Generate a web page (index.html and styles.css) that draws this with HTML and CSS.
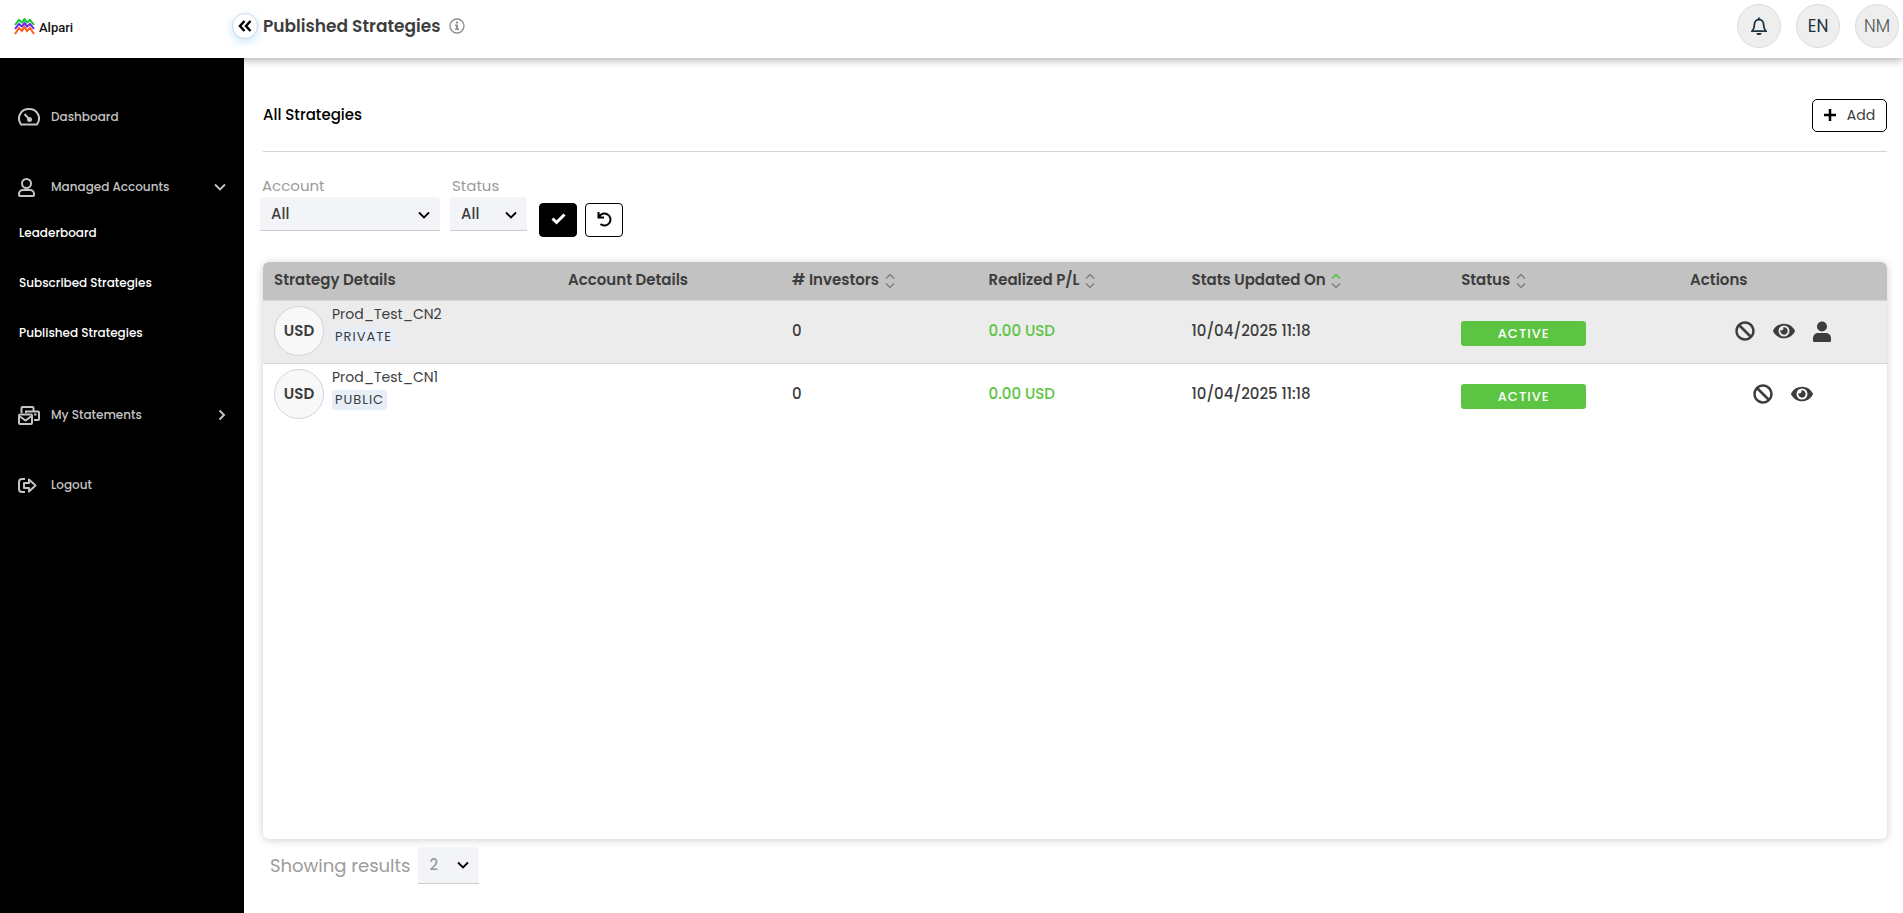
FILE: index.html
```html
<!DOCTYPE html>
<html lang="en">
<head>
  <meta charset="UTF-8">
  <meta name="viewport" content="width=device-width, initial-scale=1.0">
  <title>Published Strategies</title>
  <link rel="stylesheet" href="styles.css">
</head>
<body>

  <!-- shared icons -->
  <svg class="sprite" aria-hidden="true">
    <symbol id="icon-down" viewBox="0 0 12 8"><path d="M1 1.500 6 6.500l5-5" fill="none" stroke="currentColor" stroke-width="1.800"/></symbol>
    <symbol id="icon-sort" viewBox="0 0 10 16"><path class="up" d="M1 5.500 5 1.500l4 4"/><path class="down" d="M1 10.500l4 4 4-4"/></symbol>
    <symbol id="icon-ban" viewBox="0 0 512 512"><path fill="currentColor" d="M256 8C119 8 8 119 8 256s111 248 248 248 248-111 248-248S393 8 256 8zm130 118c66 66 70 165 22 235L151 104c71-49 170-44 235 22zM126 386c-66-66-70-165-22-235l257 257c-71 49-170 44-235-22z"/></symbol>
    <symbol id="icon-eye" viewBox="0 0 576 512"><path fill="currentColor" d="M572.500 241.400C518.300 135.600 410.900 64 288 64S57.700 135.600 3.500 241.400a32.400 32.400 0 0 0 0 29.200C57.700 376.400 165.100 448 288 448s230.300-71.600 284.500-177.400a32.400 32.400 0 0 0 0-29.200zM288 400a144 144 0 1 1 144-144 143.900 143.900 0 0 1-144 144zm0-240a95.300 95.300 0 0 0-25.300 3.800 47.900 47.900 0 0 1-66.900 66.900A95.800 95.800 0 1 0 288 160z"/></symbol>
    <symbol id="icon-user" viewBox="0 0 18 21"><circle cx="9" cy="5.500" r="5" fill="currentColor"/><path fill="currentColor" d="M5 12h8a5 5 0 0 1 5 5v2.500a1.500 1.500 0 0 1-1.500 1.500h-15A1.500 1.500 0 0 1 0 19.500V17a5 5 0 0 1 5-5z"/></symbol>
  </svg>

  <header class="topbar">
    <a class="logo" href="#">
      <svg width="21" height="17" viewBox="0 0 21 17" fill="none" stroke-width="2" aria-hidden="true">
        <path stroke="#12c931" d="M1 7l4-5 3 2.500L10.500 1 13 4.500 16 2l4 5"/>
        <path stroke="#6a25e8" d="M1 11l4-5 3 2.500L10.500 5 13 8.500 16 6l4 5"/>
        <path stroke="#ff5a1f" d="M1 16l4-6 3 3 2.500-4L13 13l3-3 4 6"/>
      </svg>
      <span>Alpari</span>
    </a>
    <button class="collapse" type="button" aria-label="Collapse menu">
      <svg width="14" height="12" viewBox="0 0 14 12" fill="none" stroke="currentColor" stroke-width="2.500" aria-hidden="true"><path d="M6.500 1 2 6l4.500 5M12.500 1 8 6l4.500 5"/></svg>
    </button>
    <h1>Published Strategies</h1>
    <svg class="info" width="16" height="16" viewBox="0 0 16 16" aria-hidden="true">
      <circle cx="8" cy="8" r="7" fill="none" stroke="currentColor" stroke-width="1.300"/>
      <path fill="currentColor" d="M7 3.500h2v2H7zM6 6.500h3v4h1v1.500H6v-1.500h1V8H6z"/>
    </svg>
    <div class="topbar-actions">
      <button class="round" type="button" aria-label="Notifications">
        <svg width="16" height="18" viewBox="0 0 16 18" fill="none" stroke="currentColor" stroke-width="1.800" aria-hidden="true">
          <path d="M8 .5v2M3.500 7a4.500 4.500 0 0 1 9 0c0 4.500 1.500 6 2.500 7.200H1C2 13 3.500 11.500 3.500 7z"/><path fill="currentColor" stroke="none" d="M5.500 16h5a2.500 2.200 0 0 1-5 0z"/>
        </svg>
      </button>
      <button class="round" type="button">EN</button>
      <button class="round user" type="button">NM</button>
    </div>
  </header>

  <div class="layout">
    <nav class="sidebar">
      <a class="nav-item" href="#">
        <svg width="22" height="18" viewBox="0 0 22 18" fill="none" stroke="currentColor" stroke-width="2" aria-hidden="true"><path d="M3 16.500C-2 9 3 1 11 1s13 8 8 15.500z"/><circle cx="11.500" cy="11.500" r="2.500" fill="currentColor" stroke="none"/><path d="M6.500 6l5 5.500"/></svg>
        <span>Dashboard</span>
      </a>
      <a class="nav-item" href="#">
        <svg width="17" height="19" viewBox="0 0 17 19" fill="none" stroke="currentColor" stroke-width="2" aria-hidden="true"><circle cx="8.500" cy="5.500" r="4.500"/><path d="M5 12h7c2 0 4 1.500 4 4v1q0 1-1 1H2q-1 0-1-1v-1c0-2.500 2-4 4-4z"/></svg>
        <span>Managed Accounts</span>
        <svg class="arrow" width="12" height="8"><use href="#icon-down"/></svg>
      </a>
      <div class="sub-menu">
        <a href="#">Leaderboard</a>
        <a href="#">Subscribed Strategies</a>
        <a href="#">Published Strategies</a>
      </div>
      <a class="nav-item" href="#">
        <svg width="22" height="19" viewBox="0 0 22 19" fill="none" stroke="currentColor" stroke-width="2" aria-hidden="true"><path d="M3.500 7V2q0-1 1-1h10q1 0 1 1v3M8 7V5.500h12q1 0 1 1V13q0 1-1 1h-4M16 8.500h2.500"/><rect x="1" y="8.500" width="13" height="9.500" rx="1"/><path d="M2 10.500l5.500 4 5.500-4"/></svg>
        <span>My Statements</span>
        <svg class="arrow" width="8" height="12" viewBox="0 0 8 12" fill="none" stroke="currentColor" stroke-width="2" aria-hidden="true"><path d="M1.500 1.500 6 6l-4.500 4.500"/></svg>
      </a>
      <a class="nav-item" href="#">
        <svg width="19" height="15" viewBox="0 0 19 15" fill="none" stroke="currentColor" stroke-width="2" stroke-linejoin="round" aria-hidden="true"><path d="M7 1H4Q1 1 1 4v7q0 3 3 3h3M11 5V1.500l6.500 6-6.500 6V10H6V5z"/></svg>
        <span>Logout</span>
      </a>
    </nav>

    <main class="content">
      <div class="section-head">
        <h2>All Strategies</h2>
        <button class="add" type="button">
          <svg width="12" height="12" viewBox="0 0 12 12" stroke="currentColor" stroke-width="2.500" aria-hidden="true"><path d="M6 0v12M0 6h12"/></svg>
          <span>Add</span>
        </button>
      </div>

      <form class="filters">
        <div class="field account">
          <label for="account">Account</label>
          <div class="select">
            <select id="account"><option>All</option></select>
            <svg width="12" height="8"><use href="#icon-down"/></svg>
          </div>
        </div>
        <div class="field status">
          <label for="status">Status</label>
          <div class="select">
            <select id="status"><option>All</option></select>
            <svg width="12" height="8"><use href="#icon-down"/></svg>
          </div>
        </div>
        <div class="filter-buttons">
          <button class="apply" type="submit" aria-label="Apply">
            <svg width="15" height="12" viewBox="0 0 15 12" fill="none" stroke="currentColor" stroke-width="3" aria-hidden="true"><path d="M1.500 5.500 5.500 9.500l8-8"/></svg>
          </button>
          <button type="reset" aria-label="Reset">
            <svg width="15" height="15" viewBox="0 0 15 15" fill="none" stroke="currentColor" stroke-width="2" aria-hidden="true"><path d="M1.500 0v5.500H7M2 5A6 6 0 1 1 3.500 12"/></svg>
          </button>
        </div>
      </form>

      <div class="card">
        <table>
          <thead>
            <tr>
              <th class="col-strategy">Strategy Details</th>
              <th class="col-account">Account Details</th>
              <th class="col-investors"># Investors <svg class="sort" width="10" height="16"><use href="#icon-sort"/></svg></th>
              <th class="col-pl">Realized P/L <svg class="sort" width="10" height="16"><use href="#icon-sort"/></svg></th>
              <th class="col-updated">Stats Updated On <svg class="sort asc" width="10" height="16"><use href="#icon-sort"/></svg></th>
              <th class="col-status">Status <svg class="sort" width="10" height="16"><use href="#icon-sort"/></svg></th>
              <th class="col-actions">Actions</th>
            </tr>
          </thead>
          <tbody>
            <tr>
              <td>
                <div class="strategy">
                  <span class="currency">USD</span>
                  <div>
                    <div class="name">Prod_Test_CN2</div>
                    <span class="tag">PRIVATE</span>
                  </div>
                </div>
              </td>
              <td></td>
              <td>0</td>
              <td class="profit">0.00 USD</td>
              <td>10/04/2025 11:18</td>
              <td><span class="badge">ACTIVE</span></td>
              <td>
                <div class="actions">
                  <button type="button" aria-label="Disable"><svg width="20" height="20"><use href="#icon-ban"/></svg></button>
                  <button type="button" aria-label="View"><svg width="22" height="20"><use href="#icon-eye"/></svg></button>
                  <button type="button" aria-label="Investors"><svg width="18" height="21"><use href="#icon-user"/></svg></button>
                </div>
              </td>
            </tr>
            <tr>
              <td>
                <div class="strategy">
                  <span class="currency">USD</span>
                  <div>
                    <div class="name">Prod_Test_CN1</div>
                    <span class="tag">PUBLIC</span>
                  </div>
                </div>
              </td>
              <td></td>
              <td>0</td>
              <td class="profit">0.00 USD</td>
              <td>10/04/2025 11:18</td>
              <td><span class="badge">ACTIVE</span></td>
              <td>
                <div class="actions">
                  <button type="button" aria-label="Disable"><svg width="20" height="20"><use href="#icon-ban"/></svg></button>
                  <button type="button" aria-label="View"><svg width="22" height="20"><use href="#icon-eye"/></svg></button>
                </div>
              </td>
            </tr>
          </tbody>
        </table>
      </div>

      <div class="results">
        <label for="results">Showing results</label>
        <div class="select">
          <select id="results"><option>2</option></select>
          <svg width="12" height="8"><use href="#icon-down"/></svg>
        </div>
      </div>
    </main>
  </div>

</body>
</html>
```
FILE: styles.css
```css
* {
  box-sizing: border-box;
}

body {
  margin: 0;
  min-height: 100vh;
  display: flex;
  flex-direction: column;
  font-family: Poppins, Inter, Arial, sans-serif;
  font-size: 15px;
  line-height: 20px;
  color: #3d3d3d;
  background-color: #fff;
}

h1, h2 {
  margin: 0;
}

a {
  color: inherit;
  text-decoration: none;
}

button, select {
  font: inherit;
  color: inherit;
  cursor: pointer;
}

svg {
  flex: none;
}

.sprite {
  position: absolute;
  width: 0;
  height: 0;
}

/* top bar */
.topbar {
  display: flex;
  align-items: center;
  height: 58px;
  padding: 0 4px 6px 14px;
  box-shadow: 0 2px 8px rgba(40, 50, 55, 0.4);
}

.logo {
  display: flex;
  align-items: center;
  gap: 4px;
  width: 218px;
  font-family: Roboto, Arial, sans-serif;
  font-size: 13px;
  font-weight: 500;
  color: #111;
}

.logo span {
  padding-top: 4px;
}

.collapse {
  display: flex;
  align-items: center;
  justify-content: center;
  width: 26px;
  height: 26px;
  padding: 0;
  border: 1px solid #d3d8ea;
  border-radius: 50%;
  background-color: #fff;
  color: #000;
  box-shadow: 0 3px 8px rgba(80, 170, 240, 0.3);
}

h1 {
  margin-left: 5px;
  font-size: 17px;
  font-weight: 600;
}

.info {
  margin-left: 8px;
  color: #8c8c8c;
}

.topbar-actions {
  display: flex;
  gap: 15px;
  margin-left: auto;
}

.round {
  display: flex;
  align-items: center;
  justify-content: center;
  width: 44px;
  height: 44px;
  padding: 0;
  border: 1px solid #dcdcdc;
  border-radius: 50%;
  background-color: #eee;
  color: #1d3443;
  font-size: 17px;
}

.round.user {
  color: #555;
  font-weight: 300;
}

.layout {
  flex: 1;
  display: flex;
}

/* sidebar */
.sidebar {
  position: relative;
  z-index: 1;
  width: 244px;
  padding-top: 24px;
  background-color: #000;
  color: #c4c4c4;
  font-size: 12px;
  font-weight: 500;
}

.nav-item {
  display: flex;
  align-items: center;
  height: 70px;
  padding: 0 18px;
}

.nav-item span {
  position: absolute;
  left: 51px;
}

.nav-item .arrow {
  margin-left: auto;
}

.sub-menu {
  margin-top: -14px;
  padding-bottom: 22px;
  color: #fff;
}

.sub-menu a {
  display: flex;
  align-items: center;
  height: 50px;
  padding: 0 19px;
}

/* content */
.content {
  flex: 1;
  display: flex;
  flex-direction: column;
  padding: 41px 16px 29px 19px;
}

.section-head {
  display: flex;
  justify-content: space-between;
  align-items: flex-start;
  padding-bottom: 19px;
  border-bottom: 1px solid #d4d4d4;
}

h2 {
  font-size: 15px;
  line-height: 32px;
  font-weight: 500;
  color: #000;
}

.add {
  display: flex;
  align-items: center;
  justify-content: center;
  gap: 11px;
  width: 75px;
  height: 33px;
  padding: 0 0 2px;
  border: 1px solid #000;
  border-radius: 5px;
  background-color: #fff;
  font-size: 14px;
}

.add svg {
  color: #000;
}

.filters {
  display: flex;
  align-items: flex-start;
  gap: 10px;
  margin: 23px 0 25px -3px;
}

.field label {
  display: block;
  padding-left: 2px;
  line-height: 22px;
  color: #9b9b9b;
}

.account {
  width: 180px;
}

.status {
  width: 77px;
}

.select {
  position: relative;
}

.select select {
  display: block;
  appearance: none;
  width: 100%;
  height: 34px;
  padding: 0 11px;
  border: 0;
  border-bottom: 1px solid #ccc;
  border-radius: 4px 4px 0 0;
  background-color: #f3f4f7;
  font-weight: 500;
}

.select svg {
  position: absolute;
  right: 10px;
  top: 14px;
  color: #000;
  pointer-events: none;
}

.filter-buttons {
  display: flex;
  gap: 8px;
  padding: 28px 0 0 2px;
}

.filter-buttons button {
  display: flex;
  align-items: center;
  justify-content: center;
  width: 38px;
  height: 34px;
  padding: 0 0 2px;
  border: 1px solid #000;
  border-radius: 4px;
  background-color: #fff;
  color: #000;
}

.filter-buttons .apply {
  background-color: #000;
  color: #fff;
}

/* strategies table */
.card {
  flex: 1;
  border-radius: 6px;
  overflow: hidden;
  box-shadow: 0 1px 8px rgba(0, 0, 0, 0.2);
}

table {
  width: 100%;
  table-layout: fixed;
  border-collapse: collapse;
}

th, td {
  padding: 0 11px 1px;
  text-align: left;
  white-space: nowrap;
}

th {
  height: 38px;
  border-bottom: 1px solid #d6d6d6;
  background-color: #c2c2c2;
  font-weight: 600;
}

td {
  height: 63px;
  font-weight: 500;
}

tbody tr:first-child {
  background-color: #ececec;
  border-bottom: 1px solid #d6d6d6;
}

.col-strategy { width: 18.1%; }
.col-account { width: 13.8%; }
.col-investors { width: 12.1%; }
.col-pl { width: 12.5%; }
.col-updated { width: 16.6%; }
.col-status { width: 14.1%; }
.col-actions { width: 12.8%; }

.sort {
  margin-left: 2px;
  vertical-align: middle;
  fill: none;
  stroke: #808080;
  stroke-width: 1.5;
  --up: #808080;
}

.sort.asc {
  --up: #4cc03c;
}

.up {
  stroke: var(--up);
}

.strategy {
  display: flex;
  align-items: center;
  gap: 8px;
}

.currency {
  display: flex;
  align-items: center;
  justify-content: center;
  width: 50px;
  height: 50px;
  border: 1px solid #ccd5e0;
  border-radius: 50%;
  background-color: #f8f8f8;
  font-weight: 600;
}

.name {
  margin-bottom: 2px;
  font-size: 14px;
  font-weight: 400;
}

.tag {
  display: inline-block;
  margin-bottom: 11px;
  padding: 0 3px;
  border-radius: 3px;
  background-color: #e7eef7;
  font-size: 13px;
  font-weight: 400;
  letter-spacing: 1px;
}

.profit {
  color: #5cc443;
}

.badge {
  display: block;
  width: 125px;
  margin-top: 5px;
  border-radius: 3px;
  background-color: #5cc443;
  color: #fff;
  font-size: 13px;
  line-height: 25px;
  letter-spacing: 1px;
  text-align: center;
}

.actions {
  display: flex;
  align-items: center;
  justify-content: center;
  gap: 18px;
}

.actions button {
  display: flex;
  padding: 0;
  border: 0;
  background: none;
}

/* footer */
.results {
  display: flex;
  align-items: center;
  gap: 8px;
  margin-top: 8px;
  padding-left: 7px;
  color: #9b9b9b;
}

.results label {
  font-size: 18px;
}

.results .select {
  width: 61px;
}

.results select {
  height: 37px;
}
```
